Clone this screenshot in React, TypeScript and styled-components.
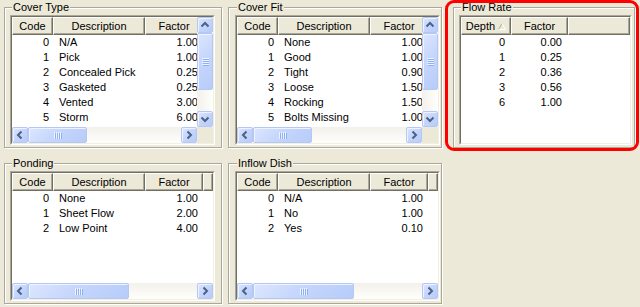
import React from 'react';
import styled, { createGlobalStyle } from 'styled-components';

const GlobalStyle = createGlobalStyle`
  html, body { margin: 0; padding: 0; }
  body {
    background: #ECE9D8;
    font-family: "Liberation Sans", Arial, sans-serif;
    font-size: 11px;
    color: #000;
    overflow: hidden;
  }
  #root { width: 640px; height: 307px; }
`;

const Page = styled.div`
  position: relative;
  width: 640px;
  height: 307px;
  box-sizing: border-box;
  padding-left: 4px;
  display: grid;
  grid-template-columns: 218px 219px 182px;
  grid-template-rows: 148px 148px;
  column-gap: 6px;
  row-gap: 8px;
  align-items: start;
  justify-items: start;
`;

const Group = styled.fieldset<{ $w: number; $pl: number; $pr: number }>`
  margin: 0;
  min-width: 0;
  width: ${p => p.$w}px;
  height: 148px;
  box-sizing: border-box;
  padding: 0 ${p => p.$pr}px 2px ${p => p.$pl}px;
  border: 1px solid #ACA899;
  box-shadow: inset 1px 1px 0 #fff, 1px 1px 0 #fff;
`;

const Legend = styled.legend`
  margin-left: 2px;
  padding: 0 1px;
  line-height: 15px;
  background: #ECE9D8;
`;

const Highlight = styled.div`
  position: absolute;
  left: 445px;
  top: 0;
  width: 194px;
  height: 151px;
  box-sizing: border-box;
  border: 3px solid #FF0000;
  border-radius: 9px;
  pointer-events: none;
`;

const Frame = styled.div<{ $w: number }>`
  width: ${p => p.$w}px;
  height: 130px;
  box-sizing: border-box;
  border: 1px solid;
  border-color: #ACA899 #fff #fff #ACA899;
`;

const Inner = styled.div<{ $v: boolean; $h: boolean }>`
  height: 100%;
  box-sizing: border-box;
  border: 1px solid;
  border-color: #716F64 #F1EFE2 #F1EFE2 #716F64;
  background: #fff;
  display: grid;
  grid-template-columns: ${p => (p.$v ? 'minmax(0, 1fr) 16px' : 'minmax(0, 1fr)')};
  grid-template-rows: ${p => (p.$h ? 'minmax(0, 1fr) 16px' : 'minmax(0, 1fr)')};
`;

const View = styled.div`
  overflow: hidden;
  min-width: 0;
`;

const Sheet = styled.div`
  width: max-content;
  min-width: 100%;
`;

const Header = styled.div`
  display: flex;
  height: 18px;
`;

const HeaderCell = styled.div<{ $w?: number }>`
  flex: ${p => (p.$w ? `0 0 ${p.$w}px` : '1 0 0')};
  box-sizing: border-box;
  height: 18px;
  border-style: solid;
  border-width: 1px;
  border-color: #fff #716F64 #716F64 #fff;
  box-shadow: inset -1px -1px 0 #ACA899;
  background: #ECE9D8;
  display: flex;
  align-items: center;
  justify-content: center;
  gap: 3px;
  line-height: 15px;
  white-space: nowrap;
  overflow: hidden;
`;

const Row = styled.div`
  display: flex;
  height: 15px;
  line-height: 15px;
`;

const Cell = styled.div<{ $w: number; $align: 'left' | 'right'; $pad: number }>`
  flex: 0 0 ${p => p.$w}px;
  box-sizing: border-box;
  text-align: ${p => p.$align};
  padding-${p => p.$align}: ${p => p.$pad}px;
  white-space: nowrap;
  overflow: hidden;
`;

const VTrack = styled.div`
  display: flex;
  flex-direction: column;
  background: linear-gradient(to right, #F3F1EC, #FEFEFB);
`;

const HTrack = styled.div`
  display: flex;
  background: linear-gradient(to bottom, #F3F1EC, #FEFEFB);
`;

const Corner = styled.div`
  background: #ECE9D8;
`;

const Spacer = styled.div`
  flex: 1;
`;

const ScrollPart = styled.div<{ $len?: number; $vertical?: boolean }>`
  flex: 0 0 ${p => p.$len ?? 16}px;
  box-sizing: border-box;
  ${p => (p.$vertical ? 'width: 16px;' : 'height: 16px;')}
  border: 1px solid #B4C8F6;
  border-radius: 2px;
  box-shadow: inset 1px 1px 0 #EEF3FF;
  background: linear-gradient(135deg, #DCE6FE 0%, #C6D6FC 45%, #B7CCFA 100%);
  display: flex;
  align-items: center;
  justify-content: center;
`;

type Dir = 'up' | 'down' | 'left' | 'right';
const arrowPts: Record<Dir, string> = {
  up: '4.5,9.5 8,6 11.5,9.5',
  down: '4.5,6.5 8,10 11.5,6.5',
  left: '9.5,4.5 6,8 9.5,11.5',
  right: '6.5,4.5 10,8 6.5,11.5',
};

const Arrow = ({ dir }: { dir: Dir }) => (
  <ScrollPart $vertical={dir === 'up' || dir === 'down'}>
    <svg width="14" height="14" viewBox="1 1 14 14">
      <polyline points={arrowPts[dir]} fill="none" stroke="#4D6185" strokeWidth="2" />
    </svg>
  </ScrollPart>
);

const Grip = ({ vertical }: { vertical?: boolean }) => (
  <svg width={vertical ? 7 : 8} height={vertical ? 8 : 7}>
    {[0, 2, 4, 6].map(i =>
      vertical ? (
        <g key={i}>
          <rect x="0" y={i} width="7" height="1" fill="#EEF4FE" />
          <rect x="1" y={i + 1} width="7" height="1" fill="#8CB0F8" />
        </g>
      ) : (
        <g key={i}>
          <rect x={i} y="0" width="1" height="7" fill="#EEF4FE" />
          <rect x={i + 1} y="1" width="1" height="7" fill="#8CB0F8" />
        </g>
      )
    )}
  </svg>
);

const SortArrow = () => (
  <svg width="8" height="7">
    <path d="M0.5 6.5 L4 0.5" stroke="#ACA899" fill="none" />
    <path d="M4 0.5 L7.5 6.5 L0.5 6.5" stroke="#fff" fill="none" />
  </svg>
);

type Col = { title: string; w: number; align: 'left' | 'right'; pad: number; sort?: boolean };

type ListProps = {
  width: number;
  cols: Col[];
  rows: string[][];
  vThumb?: number;
  hThumb?: number;
};

const ListView = ({ width, cols, rows, vThumb, hThumb }: ListProps) => {
  const v = vThumb !== undefined;
  const h = hThumb !== undefined;
  return (
    <Frame $w={width}>
      <Inner $v={v} $h={h}>
        <View>
          <Sheet>
            <Header>
              {cols.map(c => (
                <HeaderCell key={c.title} $w={c.w}>
                  {c.title}
                  {c.sort && <SortArrow />}
                </HeaderCell>
              ))}
              <HeaderCell />
            </Header>
            {rows.map((r, i) => (
              <Row key={i}>
                {cols.map((c, j) => (
                  <Cell key={j} $w={c.w} $align={c.align} $pad={c.pad}>
                    {r[j]}
                  </Cell>
                ))}
              </Row>
            ))}
          </Sheet>
        </View>
        {v && (
          <VTrack>
            <Arrow dir="up" />
            <ScrollPart $vertical $len={vThumb}>
              <Grip vertical />
            </ScrollPart>
            <Spacer />
            <Arrow dir="down" />
          </VTrack>
        )}
        {h && (
          <HTrack>
            <Arrow dir="left" />
            <ScrollPart $len={hThumb}>
              <Grip />
            </ScrollPart>
            <Spacer />
            <Arrow dir="right" />
          </HTrack>
        )}
        {v && h && <Corner />}
      </Inner>
    </Frame>
  );
};

const codeCols: Col[] = [
  { title: 'Code', w: 41, align: 'right', pad: 4 },
  { title: 'Description', w: 92, align: 'left', pad: 6 },
  { title: 'Factor', w: 58, align: 'right', pad: 5 },
];

const flowCols: Col[] = [
  { title: 'Depth', w: 50, align: 'right', pad: 6, sort: true },
  { title: 'Factor', w: 57, align: 'right', pad: 6 },
];

const coverType = [
  ['0', 'N/A', '1.00'],
  ['1', 'Pick', '1.00'],
  ['2', 'Concealed Pick', '0.25'],
  ['3', 'Gasketed', '0.25'],
  ['4', 'Vented', '3.00'],
  ['5', 'Storm', '6.00'],
];

const coverFit = [
  ['0', 'None', '1.00'],
  ['1', 'Good', '1.00'],
  ['2', 'Tight', '0.90'],
  ['3', 'Loose', '1.50'],
  ['4', 'Rocking', '1.50'],
  ['5', 'Bolts Missing', '1.00'],
];

const flowRate = [
  ['0', '0.00'],
  ['1', '0.25'],
  ['2', '0.36'],
  ['3', '0.56'],
  ['6', '1.00'],
];

const ponding = [
  ['0', 'None', '1.00'],
  ['1', 'Sheet Flow', '2.00'],
  ['2', 'Low Point', '4.00'],
];

const inflowDish = [
  ['0', 'N/A', '1.00'],
  ['1', 'No', '1.00'],
  ['2', 'Yes', '0.10'],
];

export default function App() {
  return (
    <>
      <GlobalStyle />
      <Page>
        <Group $w={218} $pl={5} $pr={6}>
          <Legend>Cover Type</Legend>
          <ListView width={205} cols={codeCols} rows={coverType} vThumb={57} hThumb={59} />
        </Group>
        <Group $w={214} $pl={6} $pr={1}>
          <Legend>Cover Fit</Legend>
          <ListView width={205} cols={codeCols} rows={coverFit} vThumb={57} hThumb={59} />
        </Group>
        <Group $w={182} $pl={5} $pr={2}>
          <Legend>Flow Rate</Legend>
          <ListView width={173} cols={flowCols} rows={flowRate} />
        </Group>
        <Group $w={218} $pl={5} $pr={6}>
          <Legend>Ponding</Legend>
          <ListView width={205} cols={codeCols} rows={ponding} hThumb={101} />
        </Group>
        <Group $w={214} $pl={6} $pr={1}>
          <Legend>Inflow Dish</Legend>
          <ListView width={205} cols={codeCols} rows={inflowDish} hThumb={101} />
        </Group>
        <Highlight />
      </Page>
    </>
  );
}
